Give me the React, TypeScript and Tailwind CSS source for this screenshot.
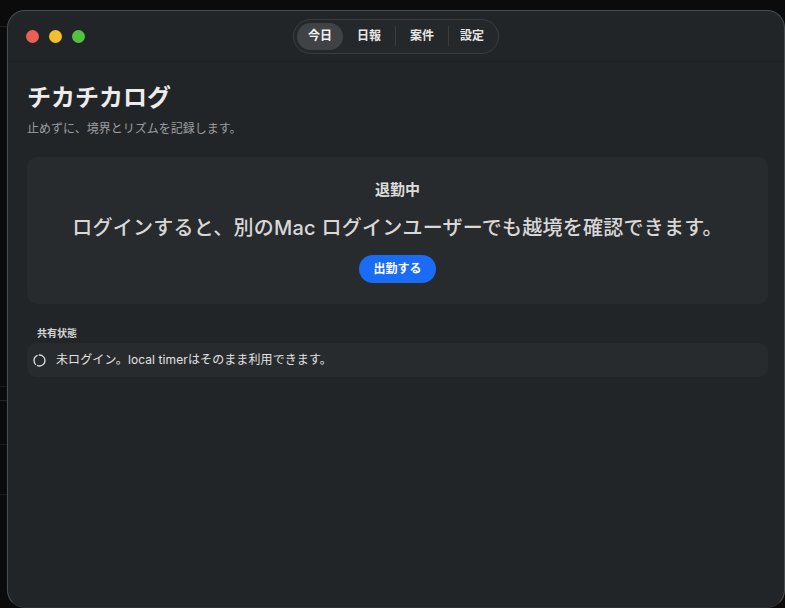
const tabs = [
  { label: '今日', w: 'w-[46px]' },
  { label: '日報', w: 'w-[52px]' },
  { label: '案件', w: 'w-[52px]' },
  { label: '設定', w: 'w-[46px]' },
];

const App = () => {
  return (
    <div
      className="flex w-[785px] h-[608px] overflow-hidden bg-[#0b0b0b] text-[#e4e4e4]"
      style={{ fontFamily: 'Inter, "Noto Sans CJK JP", sans-serif' }}
    >
      {/* desktop behind the window */}
      <div className="flex flex-col w-[7px] shrink-0">
        <div className="h-[27px] border-b border-[#242424]" />
        <div className="h-[360px] border-b border-[#1c1c1c]" />
        <div className="h-[14px] border-b border-[#242424]" />
        <div className="h-[44px] border-b border-[#1c1c1c]" />
        <div className="h-[50px] border-b border-[#1c1c1c]" />
      </div>

      <div className="flex flex-col flex-1 mt-[10px] rounded-[18px] border border-[#4b4e51] border-b-[#2c2f31] bg-[#222527] overflow-hidden">
        {/* title bar */}
        <div className="grid grid-cols-[1fr_auto_1fr] items-center h-[51px] shrink-0 border-b border-[#1d1f21]">
          <div className="flex items-center gap-[10px] pl-[18px]">
            <span className="w-[13px] h-[13px] rounded-full bg-[#ec5f57]" />
            <span className="w-[13px] h-[13px] rounded-full bg-[#f4bf2c]" />
            <span className="w-[13px] h-[13px] rounded-full bg-[#55c142]" />
          </div>
          <div className="flex items-center h-[35px] px-[3px] rounded-full border border-[#3b3e41] bg-[#25282a]">
            {tabs.map((t, i) => (
              <div key={t.label} className="flex items-center">
                {i > 1 && <span className="w-px h-[20px] bg-[#3a3d40]" />}
                <span
                  className={
                    i === 0
                      ? `flex items-center justify-center ${t.w} h-[27px] rounded-full bg-[#3f4346] text-[12px] font-semibold text-[#f0f0f0]`
                      : `flex items-center justify-center ${t.w} h-[27px] text-[12px] font-semibold text-[#e6e6e6]`
                  }
                >
                  {t.label}
                </span>
              </div>
            ))}
          </div>
          <div />
        </div>

        {/* content */}
        <div className="flex flex-col pl-[19px] pr-[16px] pt-[20px]">
          <h1 className="text-[24px] leading-[32px] font-bold text-[#ececec]">
            チカチカログ
          </h1>
          <p className="mt-[6px] text-[12px] leading-[17px] text-[#9b9ea1]">
            止めずに、境界とリズムを記録します。
          </p>

          <div className="flex flex-col items-center mt-[20px] pt-[22px] pb-[21px] rounded-[10px] bg-[#282b2d]">
            <div className="text-[15px] leading-[22px] font-bold text-[#dcdcdc]">退勤中</div>
            <div className="mt-[13px] text-[20px] leading-[28px] font-medium tracking-[0.25px] text-[#d8d8d8]">
              ログインすると、別のMac ログインユーザーでも越境を確認できます。
            </div>
            <button className="mt-[13px] w-[77px] h-[28px] rounded-full bg-[#1a6cf6] text-[12px] font-bold text-white">
              出勤する
            </button>
          </div>

          <div className="mt-[22px] ml-[10px] text-[10px] leading-[14px] font-semibold text-[#d4d4d4]">
            共有状態
          </div>
          <div className="flex items-center gap-[10px] mt-[3px] h-[34px] pl-[6px] rounded-[9px] bg-[#282b2d]">
            <svg width="13" height="13" viewBox="0 0 13 13" fill="none">
              <circle
                cx="6.5"
                cy="6.5"
                r="5.5"
                stroke="#e0e0e0"
                strokeWidth="1.3"
                strokeDasharray="11 1.2"
              />
            </svg>
            <span className="text-[12px] leading-[16px] tracking-[0.1px] text-[#e2e2e2]">
              未ログイン。local timerはそのまま利用できます。
            </span>
          </div>
        </div>
      </div>
    </div>
  );
};

export default App;
